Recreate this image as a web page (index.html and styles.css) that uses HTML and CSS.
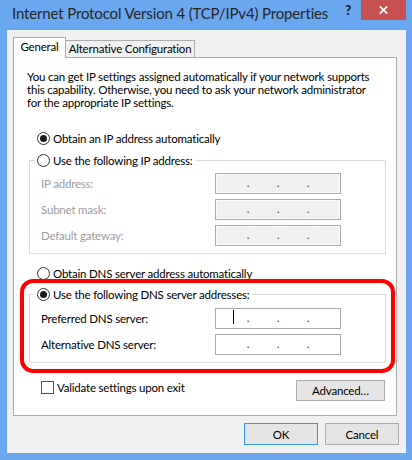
FILE: index.html
```html
<!DOCTYPE html>
<html>
<head>
<meta charset="utf-8">
<title>Internet Protocol Version 4 (TCP/IPv4) Properties</title>
<link rel="stylesheet" href="styles.css">
</head>
<body>
<div class="window">
  <div class="titlebar">
    <div class="title">Internet Protocol Version 4 (TCP/IPv4) Properties</div>
    <div class="help">?</div>
    <div class="close"><svg width="9" height="8" viewBox="0 0 9 8"><path d="M0.8 0.4 L8.2 7.6 M8.2 0.4 L0.8 7.6" stroke="#fff" stroke-width="1.7" fill="none"/></svg></div>
  </div>
  <div class="dialog">
    <div class="tabs">
      <div class="tab tab-active">General</div>
      <div class="tab tab-inactive">Alternative Configuration</div>
    </div>
    <div class="panel">
      <p class="intro">You can get IP settings assigned automatically if your network supports<br>this capability. Otherwise, you need to ask your network administrator<br>for the appropriate IP settings.</p>

      <div class="radio-row row-obtain-ip"><span class="radio checked"></span><span>Obtain an IP address automatically</span></div>

      <fieldset class="group group-ip">
        <legend><span class="radio-row legend-row"><span class="radio"></span><span>Use the following IP address:</span></span></legend>
        <div class="field disabled"><span class="label">IP address:</span><span class="ipbox"><span class="seg">.</span><span class="seg">.</span><span class="seg">.</span></span></div>
        <div class="field disabled"><span class="label">Subnet mask:</span><span class="ipbox"><span class="seg">.</span><span class="seg">.</span><span class="seg">.</span></span></div>
        <div class="field disabled"><span class="label">Default gateway:</span><span class="ipbox"><span class="seg">.</span><span class="seg">.</span><span class="seg">.</span></span></div>
      </fieldset>

      <div class="radio-row row-obtain-dns"><span class="radio"></span><span>Obtain DNS server address automatically</span></div>

      <fieldset class="group group-dns">
        <legend><span class="radio-row legend-row"><span class="radio checked"></span><span>Use the following DNS server addresses:</span></span></legend>
        <div class="field"><span class="label">Preferred DNS server:</span><span class="ipbox"><span class="caret"></span><span class="seg">.</span><span class="seg">.</span><span class="seg">.</span></span></div>
        <div class="field"><span class="label">Alternative DNS server:</span><span class="ipbox"><span class="seg">.</span><span class="seg">.</span><span class="seg">.</span></span></div>
      </fieldset>

      <div class="bottom-row">
        <label class="check-row"><span class="checkbox"></span><span>Validate settings upon exit</span></label>
        <div class="btn btn-advanced">Advanced…</div>
      </div>

      <div class="highlight"></div>
    </div>
    <div class="buttons">
      <div class="btn btn-default">OK</div>
      <div class="btn">Cancel</div>
    </div>
  </div>
</div>
</body>
</html>
```
FILE: styles.css
```css
html, body {
  margin: 0;
  padding: 0;
}
body {
  background: #6ba7ee;
  font-family: Lato, "Liberation Sans", sans-serif;
  font-size: 11.5px;
  letter-spacing: -0.2px;
  color: #000;
}
.window {
  width: 412px;
  height: 460px;
  background: #6ba7ee;
  display: flex;
  flex-direction: column;
}
.titlebar {
  height: 30px;
  display: flex;
  align-items: flex-start;
  padding-left: 12px;
  flex: none;
}
.title {
  flex: 1;
  font-size: 15px;
  letter-spacing: -0.15px;
  line-height: 20px;
  padding-top: 3px;
  color: #262626;
  white-space: nowrap;
}
.help {
  font-size: 13px;
  font-weight: 900;
  line-height: 16px;
  padding-top: 2px;
  margin-right: 10px;
  color: #222;
}
.close {
  width: 45px;
  height: 20px;
  margin-right: 6px;
  background: #c75050;
  display: flex;
  align-items: center;
  justify-content: center;
}
.close svg { display: block; }
.dialog {
  flex: 1;
  margin: 0 6px 7px 7px;
  background: #f0f0f0;
  padding: 7px 7px 0 6px;
  display: flex;
  flex-direction: column;
}
.tabs {
  display: flex;
  align-items: flex-end;
  height: 21px;
  margin-bottom: -1px;
  position: relative;
  z-index: 1;
}
.tab {
  box-sizing: border-box;
  white-space: nowrap;
  text-align: center;
}
.tab-active {
  width: 53px;
  height: 21px;
  background: #fff;
  border: 1px solid #acacac;
  border-bottom: none;
  line-height: 17px;
}
.tab-inactive {
  width: 129px;
  height: 17px;
  margin-bottom: 1px;
  background: #f0f0f0;
  border-top: 1px solid #acacac;
  border-right: 1px solid #acacac;
  line-height: 15px;
}
.panel {
  position: relative;
  box-sizing: border-box;
  width: 384px;
  height: 359px;
  background: #fff;
  border: 1px solid #acacac;
  padding: 12px 0 0 13px;
}
.intro {
  margin: 0;
  line-height: 13px;
  white-space: nowrap;
}
.radio-row {
  display: flex;
  align-items: center;
  gap: 3px;
  height: 16px;
  white-space: nowrap;
}
.row-obtain-ip {
  margin: 21px 0 0 10px;
}
.row-obtain-dns {
  margin: 11px 0 0 10px;
}
.radio {
  box-sizing: border-box;
  width: 13px;
  height: 13px;
  border: 1px solid #333;
  border-radius: 50%;
  background: #fff;
  display: flex;
  align-items: center;
  justify-content: center;
  flex: none;
}
.radio.checked::after {
  content: "";
  width: 7px;
  height: 7px;
  border-radius: 50%;
  background: #1a1a1a;
}
.group {
  box-sizing: border-box;
  width: 357px;
  margin: 6px 0 0 2px;
  border: 1px solid #dcdcdc;
  padding: 5px 0 7px 11px;
  min-width: 0;
}
.group-dns {
  margin-top: 5px;
  padding-top: 6px;
}
.group legend {
  padding: 0 3px 0 2px;
  margin-left: -6px;
  height: 16px;
}
.legend-row {
  height: 16px;
}
.field {
  display: flex;
  align-items: center;
  height: 21px;
  margin-bottom: 5px;
}
.field:last-child {
  margin-bottom: 0;
}
.label {
  width: 174px;
  white-space: nowrap;
}
.field.disabled .label {
  color: #9d9d9d;
}
.ipbox {
  box-sizing: border-box;
  width: 126px;
  height: 21px;
  border: 1px solid #ababab;
  background: #fff;
  display: flex;
  padding-left: 17px;
  line-height: 17px;
  color: #3a3a5a;
}
.field.disabled .ipbox {
  background: #f0f0f0;
  box-shadow: inset 0 0 0 1px #fafafa;
}
.seg {
  width: 30px;
  text-align: center;
  letter-spacing: 0;
}
.caret {
  width: 1px;
  height: 14px;
  margin: 1px -1px 0 0;
  background: #000;
}
.bottom-row {
  display: flex;
  justify-content: space-between;
  align-items: flex-start;
  margin-top: 17px;
  padding-right: 11px;
}
.check-row {
  display: flex;
  align-items: center;
  gap: 3px;
  height: 13px;
  margin: 1px 0 0 14px;
  white-space: nowrap;
}
.checkbox {
  box-sizing: border-box;
  width: 13px;
  height: 13px;
  border: 1px solid #555;
  background: #fff;
}
.btn {
  box-sizing: border-box;
  width: 74px;
  height: 22px;
  border: 1px solid #acacac;
  background: #e5e5e5;
  display: flex;
  align-items: center;
  justify-content: center;
  white-space: nowrap;
}
.btn-advanced {
  width: 89px;
  height: 21px;
}
.btn-default {
  border-color: #3399ff;
}
.buttons {
  display: flex;
  justify-content: flex-end;
  gap: 7px;
  margin-top: 7px;
}
.highlight {
  position: absolute;
  left: 6px;
  top: 221px;
  width: 375px;
  height: 94px;
  box-sizing: border-box;
  border: 4px solid #ff0000;
  border-radius: 13px;
  pointer-events: none;
}
```
